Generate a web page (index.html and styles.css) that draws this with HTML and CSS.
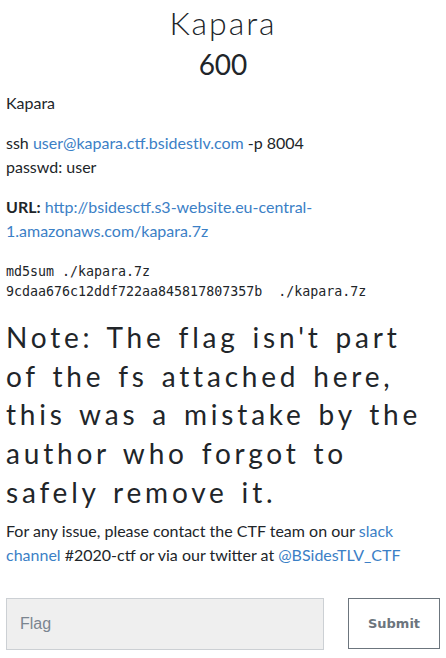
FILE: index.html
```html
<!DOCTYPE html>
<html lang="en">

<head>
     <meta charset="UTF-8">
     <meta name="viewport" content="width=device-width, initial-scale=1.0">
     <title>Kapara</title>
     <link rel="stylesheet" href="styles.css">
</head>

<body>
     <main class="challenge">
          <h2 class="challenge-name">Kapara</h2>
          <h3 class="challenge-value">600</h3>

          <div class="challenge-desc">
               <p>Kapara</p>
               <p>ssh <a href="#">user@kapara.ctf.bsidestlv.com</a> -p 8004<br>passwd: user</p>
               <p><strong>URL:</strong> <a href="#">http://bsidesctf.s3-website.eu-central-1.amazonaws.com/kapara.7z</a></p>
               <pre>md5sum ./kapara.7z
9cdaa676c12ddf722aa845817807357b  ./kapara.7z</pre>
               <h1 class="note">Note: The flag isn't part of the fs attached here, this was a mistake by the author who forgot to safely remove it.</h1>
               <p>For any issue, please contact the CTF team on our <a href="#">slack channel</a> #2020-ctf or via our twitter at <a href="#">@BSidesTLV_CTF</a></p>
          </div>

          <form class="submit-row">
               <input class="flag-input" type="text" placeholder="Flag">
               <button class="submit-btn" type="button">Submit</button>
          </form>
     </main>
</body>

</html>
```

FILE: styles.css
```css
body {
     font-family: Lato, "Open Sans", sans-serif;
     font-size: 16px;
     line-height: 1.5;
     margin: 0;
     padding: 0;
     background-color: #fff;
     color: #212529;
}

a {
     color: #3b80c6;
     text-decoration: none;
}

.challenge {
     padding: 0 6px;
}

.challenge-name {
     font-weight: 300;
     font-size: 32px;
     letter-spacing: 2px;
     line-height: 1.2;
     text-align: center;
     margin: 4px 0 0;
}

.challenge-value {
     font-weight: 400;
     font-size: 28px;
     line-height: 1.2;
     text-align: center;
     margin: 6px 0 0;
}

.challenge-desc {
     margin-top: 9px;
}

.challenge-desc p {
     margin: 0 0 16px;
}

pre {
     font-family: "DejaVu Sans Mono", monospace;
     font-size: 13.3px;
     line-height: 20px;
     margin: 19px 0 16px;
}

.note {
     font-weight: 400;
     font-size: 28px;
     letter-spacing: 3.8px;
     word-spacing: 3px;
     line-height: 38.7px;
     margin: 0 0 7px;
}

.submit-row {
     display: flex;
     gap: 24px;
     margin-top: 31px;
}

.flag-input {
     flex: 1;
     height: 52px;
     box-sizing: border-box;
     background-color: #efefef;
     border: 1px solid #ccd0d4;
     padding: 0 13px;
     font-family: "Liberation Sans", Arial, sans-serif;
     font-size: 16px;
     color: #495057;
}

.flag-input::placeholder {
     color: #7b8590;
}

.submit-btn {
     width: 92px;
     height: 51px;
     background-color: #fff;
     border: 1px solid #6c757d;
     color: #6c757d;
     font-family: "DejaVu Sans", sans-serif;
     font-weight: bold;
     font-size: 13px;
     cursor: pointer;
}
```
